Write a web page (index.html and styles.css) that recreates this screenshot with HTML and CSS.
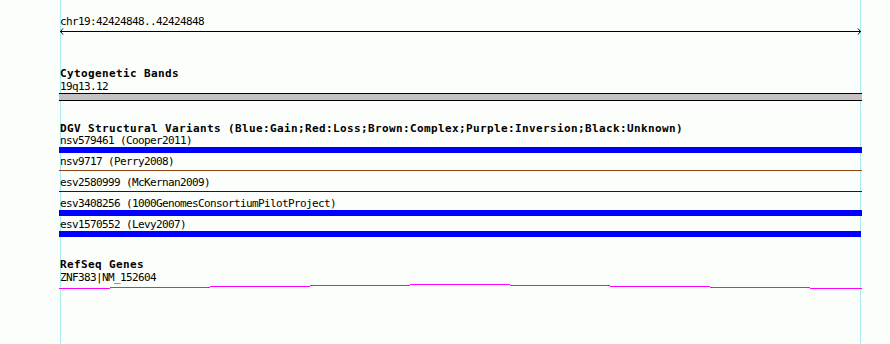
FILE: index.html
```html
<!DOCTYPE html>
<html>
<head>
<meta charset="utf-8">
<link rel="stylesheet" href="styles.css">
</head>
<body>
<div class="panel">
  <div class="track">
    <div class="ruler">
      <div class="label">chr19:42424848..42424848</div>
      <svg class="arrow" width="803" height="7" viewBox="0 0 803 7">
        <rect x="1" y="3" width="801" height="1" fill="#000"/>
        <polyline points="4,0.5 1.5,3.5 4,6.5" fill="none" stroke="#000" stroke-width="1"/>
        <polyline points="799,0.5 801.5,3.5 799,6.5" fill="none" stroke="#000" stroke-width="1"/>
      </svg>
    </div>

    <section class="cyto">
      <div class="title">Cytogenetic Bands</div>
      <div class="label">19q13.12</div>
      <div class="band"></div>
    </section>

    <section class="dgv">
      <div class="title">DGV Structural Variants (Blue:Gain;Red:Loss;Brown:Complex;Purple:Inversion;Black:Unknown)</div>
      <div class="row">
        <div class="row-label">nsv579461 (Cooper2011)</div>
        <div class="feat thick gain"></div>
      </div>
      <div class="row">
        <div class="row-label">nsv9717 (Perry2008)</div>
        <div class="feat thin complex"></div>
      </div>
      <div class="row">
        <div class="row-label">esv2580999 (McKernan2009)</div>
        <div class="feat thin gain"></div>
      </div>
      <div class="row">
        <div class="row-label">esv3408256 (1000GenomesConsortiumPilotProject)</div>
        <div class="feat thick gain"></div>
      </div>
      <div class="row">
        <div class="row-label">esv1570552 (Levy2007)</div>
        <div class="feat thick gain short"></div>
      </div>
    </section>

    <section class="refseq">
      <div class="title">RefSeq Genes</div>
      <div class="label">ZNF383|NM_152604</div>
      <svg class="gene" width="803" height="5" viewBox="0 0 803 5" shape-rendering="crispEdges">
        <g fill="#ff00ff">
          <rect x="0" y="4" width="51" height="1"/>
          <rect x="51" y="3" width="100" height="1"/>
          <rect x="151" y="2" width="100" height="1"/>
          <rect x="251" y="1" width="100" height="1"/>
          <rect x="351" y="0" width="100" height="1"/>
          <rect x="451" y="1" width="100" height="1"/>
          <rect x="551" y="2" width="100" height="1"/>
          <rect x="651" y="3" width="100" height="1"/>
          <rect x="751" y="4" width="52" height="1"/>
        </g>
      </svg>
    </section>
  </div>
</div>
</body>
</html>
```

FILE: styles.css
```css
html, body {
  margin: 0;
  padding: 0;
}

body {
  background: #fcfefc;
  width: 890px;
  height: 344px;
  overflow: hidden;
}

.panel {
  height: 344px;
  background-image:
    linear-gradient(to right,
      transparent 60px, #a9ecef 60px, #a9ecef 61px, transparent 61px,
      transparent 860px, #a9ecef 860px, #a9ecef 861px, transparent 861px);
}

.track {
  margin-left: 59px;
  width: 803px;
  font-family: "DejaVu Sans Mono", "Liberation Mono", monospace;
  color: #000;
}

.label,
.row-label {
  font-size: 11px;
  line-height: 13px;
  letter-spacing: -0.623px;
  padding-left: 1px;
  white-space: nowrap;
}

.row-label {
  line-height: 11px;
  height: 12px;
}

.title {
  font-size: 11px;
  line-height: 13px;
  font-weight: bold;
  letter-spacing: 0.377px;
  padding-left: 1px;
  white-space: nowrap;
  height: 13px;
}

.ruler {
  padding-top: 15px;
}

.ruler .label {
  height: 13px;
}

.arrow {
  display: block;
}

.cyto {
  margin-top: 32px;
}

.cyto .label {
  height: 13px;
}

.band {
  height: 6px;
  background: #c4c2c4;
  border-top: 1px solid #000;
  border-bottom: 1px solid #000;
}

.dgv {
  margin-top: 21px;
}

.row {
  height: 21px;
}

.feat.thick {
  height: 6px;
}

.feat.thin {
  height: 1px;
  margin-top: 2px;
}

.feat.gain {
  background: #0000ff;
}

.feat.complex {
  background: #8b4513;
}

.feat.short {
  width: 802px;
}

.refseq {
  margin-top: 18px;
}

.refseq .label {
  height: 13px;
}

.gene {
  display: block;
}
```
